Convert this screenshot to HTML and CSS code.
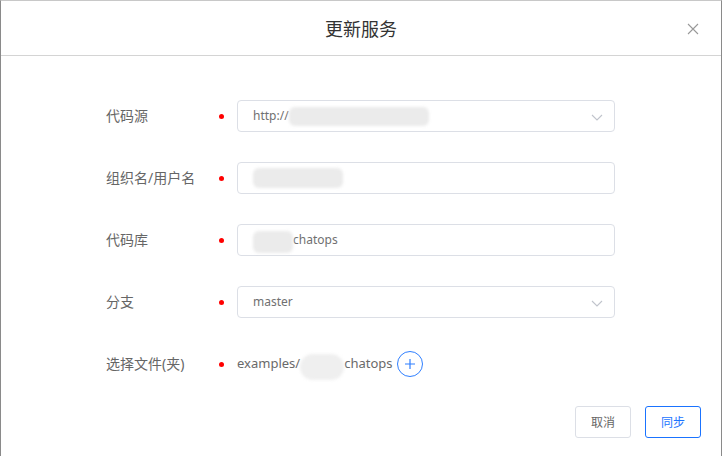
FILE: index.html
```html
<!DOCTYPE html>
<html lang="zh">
<head>
    <meta charset="UTF-8">
    <title>更新服务</title>
    <link rel="stylesheet" href="styles.css">
</head>
<body>
    <div class="dialog">
        <div class="dialog-header">
            <span class="dialog-title">更新服务</span>
            <span class="dialog-close">
                <svg width="12" height="12" viewBox="0 0 12 12"><path d="M1 1L11 11M11 1L1 11" stroke="#999" stroke-width="1.1" fill="none"/></svg>
            </span>
        </div>

        <div class="dialog-body">
            <div class="form-row">
                <label class="form-label">代码源</label>
                <span class="required-dot"></span>
                <div class="form-input select">
                    <span class="input-text">http://</span>
                    <span class="blur blur-url"></span>
                    <svg class="chevron" width="12" height="7" viewBox="0 0 12 7"><path d="M1 1L6 6L11 1" stroke="#c0c4cc" stroke-width="1.1" fill="none"/></svg>
                </div>
            </div>
            <div class="form-row">
                <label class="form-label">组织名/用户名</label>
                <span class="required-dot"></span>
                <div class="form-input">
                    <span class="blur blur-org"></span>
                </div>
            </div>
            <div class="form-row">
                <label class="form-label">代码库</label>
                <span class="required-dot"></span>
                <div class="form-input">
                    <span class="blur blur-repo"></span>
                    <span class="input-text">chatops</span>
                </div>
            </div>
            <div class="form-row">
                <label class="form-label">分支</label>
                <span class="required-dot"></span>
                <div class="form-input select">
                    <span class="input-text">master</span>
                    <svg class="chevron" width="12" height="7" viewBox="0 0 12 7"><path d="M1 1L6 6L11 1" stroke="#c0c4cc" stroke-width="1.1" fill="none"/></svg>
                </div>
            </div>
            <div class="form-row">
                <label class="form-label">选择文件(夹)</label>
                <span class="required-dot"></span>
                <div class="file-path">
                    <span>examples/</span>
                    <span class="blur blur-path"></span>
                    <span>chatops</span>
                    <span class="add-btn">
                        <svg width="12" height="12" viewBox="0 0 12 12"><path d="M6 1V11M1 6H11" stroke="#2f7fff" stroke-width="1.2" fill="none"/></svg>
                    </span>
                </div>
            </div>
        </div>

        <div class="dialog-footer">
            <button class="btn">取消</button>
            <button class="btn btn-primary">同步</button>
        </div>
    </div>
</body>
</html>
```

FILE: styles.css
```css
body {
    margin: 0;
    font-family: "Noto Sans", "Noto Sans CJK SC", sans-serif;
    background-color: #fff;
}
.dialog {
    width: 720px;
    height: 455px;
    border-top: 1px solid #c8c8c8;
    border-left: 1px solid #8a8a8a;
    border-right: 1px solid #8a8a8a;
    background-color: #fff;
    display: flex;
    flex-direction: column;
}
.dialog-header {
    height: 54px;
    border-bottom: 1px solid #d4d4d4;
    display: flex;
    align-items: center;
    justify-content: center;
    position: relative;
}
.dialog-title {
    font-size: 18px;
    color: #333;
}
.dialog-close {
    position: absolute;
    right: 22px;
    top: 22px;
    width: 12px;
    height: 12px;
    display: flex;
}
.dialog-body {
    padding: 44px 0 0 105px;
    display: flex;
    flex-direction: column;
    gap: 30px;
}
.form-row {
    display: flex;
    align-items: center;
    height: 32px;
}
.form-label {
    width: 113px;
    font-size: 14px;
    color: #666;
    margin-top: -3px;
}
.required-dot {
    width: 5px;
    height: 5px;
    border-radius: 50%;
    background-color: #f00;
    margin-right: 13px;
}
.form-input {
    height: 30px;
    border: 1px solid #dcdfe6;
    border-radius: 4px;
    display: flex;
    align-items: center;
    padding-left: 15px;
    box-sizing: content-box;
    position: relative;
    width: 361px;
}
.input-text {
    font-size: 12px;
    color: #707070;
    margin-top: -2px;
}
.chevron {
    position: absolute;
    right: 11px;
    top: 13px;
}
.blur {
    display: inline-block;
    background-color: #ebebeb;
    border-radius: 6px;
    filter: blur(1.5px);
}
.blur-url {
    width: 140px;
    height: 19px;
}
.blur-org {
    width: 90px;
    height: 20px;
}
.blur-repo {
    width: 40px;
    height: 22px;
    margin-top: 4px;
}
.file-path {
    display: flex;
    align-items: center;
    font-size: 13px;
    color: #6a6a6a;
    margin-top: -3px;
}
.blur-path {
    width: 44px;
    height: 26px;
    background-color: #efefef;
    border-radius: 13px;
    margin-top: 8px;
}
.add-btn {
    width: 24px;
    height: 24px;
    border: 1px solid #2f7fff;
    border-radius: 50%;
    display: flex;
    align-items: center;
    justify-content: center;
    margin-left: 4px;
    margin-top: 2px;
}
.dialog-footer {
    margin-top: auto;
    display: flex;
    justify-content: flex-end;
    gap: 14px;
    padding: 0 20px 18px 0;
}
.btn {
    width: 56px;
    height: 32px;
    font-family: "Noto Sans", "Noto Sans CJK SC", sans-serif;
    font-size: 12px;
    color: #666;
    background-color: #fff;
    border: 1px solid #dcdfe6;
    border-radius: 3px;
    padding: 0;
}
.btn-primary {
    color: #1a73ff;
    border-color: #1a73ff;
}
```
